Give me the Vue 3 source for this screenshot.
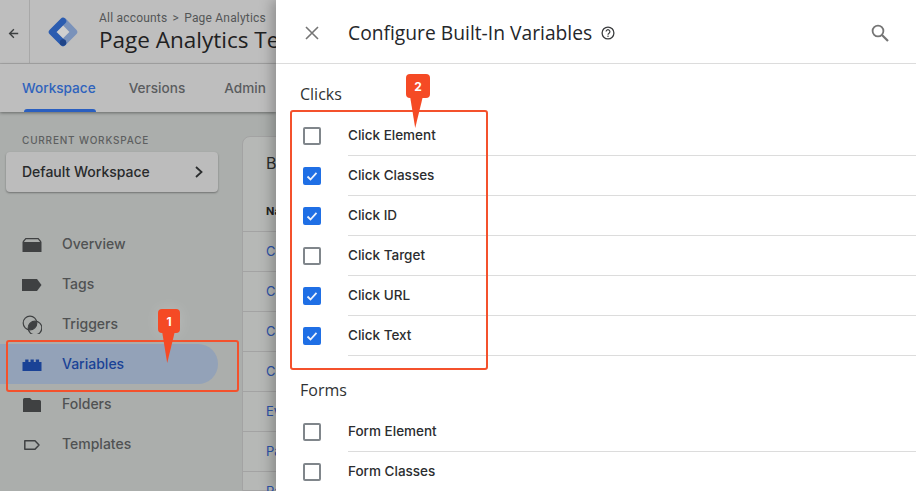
<script setup>
const nav = [
  { label: 'Overview', icon: 'overview' },
  { label: 'Tags', icon: 'tags' },
  { label: 'Triggers', icon: 'triggers' },
  { label: 'Variables', icon: 'variables', active: true },
  { label: 'Folders', icon: 'folders' },
  { label: 'Templates', icon: 'templates' }
]
const rows = ['Container ID', 'Custom Event', 'Click Text', 'Click URL', 'Event', 'Page Path', 'Page URL']
const sections = [
  {
    title: 'Clicks',
    items: [
      { label: 'Click Element', on: false },
      { label: 'Click Classes', on: true },
      { label: 'Click ID', on: true },
      { label: 'Click Target', on: false },
      { label: 'Click URL', on: true },
      { label: 'Click Text', on: true }
    ]
  },
  {
    title: 'Forms',
    items: [
      { label: 'Form Element', on: false },
      { label: 'Form Classes', on: false }
    ]
  }
]
</script>

<template>
  <div class="page">
    <div class="app">
      <header class="top">
        <button class="back" aria-label="Back">
          <svg width="11" height="11" viewBox="0 0 14 14"><path d="M13 7H2M7.500 1.500 2 7l5.500 5.500" fill="none" stroke="#3c3f40" stroke-width="1.700"/></svg>
        </button>
        <svg class="logo" width="32" height="32" viewBox="0 0 32 32">
          <path d="M16 9.500 22.500 16 16 22.500 9.500 16Z" fill="#cfcfcf"/>
          <path d="M17 5.500 27 16 17 26" fill="none" stroke="#7a92ba" stroke-width="6.500" stroke-linecap="round" stroke-linejoin="round"/>
          <path d="M16 5 5 16 16 27" fill="none" stroke="#2b5cb0" stroke-width="6.500" stroke-linecap="round" stroke-linejoin="round"/>
          <circle cx="16" cy="26.500" r="3.200" fill="#1f4488"/>
        </svg>
        <div class="titles">
          <div class="crumb">All accounts <span class="sep">&gt;</span> Page Analytics</div>
          <div class="container">Page Analytics Tem</div>
        </div>
      </header>
      <nav class="tabs">
        <span class="tab current">Workspace</span>
        <span class="tab versions">Versions</span>
        <span class="tab admin">Admin</span>
      </nav>
      <div class="main">
        <aside class="side">
          <div class="wlabel">CURRENT WORKSPACE</div>
          <div class="wbox">
            <span class="lift">Default Workspace</span>
            <svg width="10" height="14" viewBox="0 0 10 14"><path d="M2 2l5.500 5L2 12" fill="none" stroke="#2b2d2e" stroke-width="1.800"/></svg>
          </div>
          <ul class="navlist">
            <li v-for="n in nav" :key="n.label" class="navitem" :class="{ active: n.active }">
              <svg class="navicon" width="20" height="20" viewBox="0 0 20 20">
                <g v-if="n.icon === 'overview'">
                  <path d="M1 8 3.800 4.600H16.200L19 8" fill="none" stroke="#3f4142" stroke-width="1.200"/>
                  <path d="M.5 8h19v10H.5Z" fill="#3f4142"/>
                </g>
                <path v-else-if="n.icon === 'tags'" d="M0 5h15l4.500 6-4.500 6H0Z" fill="#3f4142"/>
                <g v-else-if="n.icon === 'triggers'">
                  <clipPath id="trigger-clip"><circle cx="8" cy="9" r="6.800"/></clipPath>
                  <circle cx="13" cy="14" r="6.800" fill="#3f4142" clip-path="url(#trigger-clip)"/>
                  <circle cx="8" cy="9" r="6.800" fill="none" stroke="#3f4142" stroke-width="1.200"/>
                  <circle cx="13" cy="14" r="6.800" fill="none" stroke="#3f4142" stroke-width="1.200"/>
                </g>
                <path v-else-if="n.icon === 'variables'" d="M.5 8h2.700V5.500h3.300V8h2V5.500h3.300V8h2V5.500h3.300V8h2.400v9H.5Z" fill="#1a4296"/>
                <path v-else-if="n.icon === 'folders'" d="M1 5.500Q1 4 2.500 4H8l2 2h7.500Q19 6 19 7.500V18H1Z" fill="#3f4142"/>
                <path v-else d="M2.800 6.700h10.200l4 4.300-4 4.300H2.800Z" fill="none" stroke="#3f4142" stroke-width="1.500" stroke-linejoin="round"/>
              </svg>
              <span class="lift">{{ n.label }}</span>
            </li>
          </ul>
        </aside>
        <section class="card">
          <div class="cardtitle">Built-In Variables</div>
          <div class="cardhead">Name</div>
          <div v-for="r in rows" :key="r" class="cardrow">{{ r }}</div>
        </section>
      </div>
    </div>

    <div class="panel">
      <header class="phead">
        <svg class="close" width="14" height="14" viewBox="0 0 14 14"><path d="M1 1l12 12M13 1 1 13" stroke="#757575" stroke-width="1.600" fill="none"/></svg>
        <h1>Configure Built-In Variables</h1>
        <svg class="help" width="14" height="14" viewBox="0 0 14 14">
          <circle cx="7" cy="7" r="5.900" fill="none" stroke="#3a3c3e" stroke-width="1.300"/>
          <path d="M5.100 5.600a1.900 1.900 0 1 1 2.900 1.600c-.7.450-1 .8-1 1.500" fill="none" stroke="#3a3c3e" stroke-width="1.200"/>
          <circle cx="7" cy="10.200" r=".75" fill="#3a3c3e"/>
        </svg>
        <svg class="search" width="20" height="20" viewBox="0 0 20 20">
          <circle cx="8" cy="8" r="5.400" fill="none" stroke="#757575" stroke-width="1.800"/>
          <path d="M12 12l6 6" stroke="#757575" stroke-width="2.200" fill="none"/>
        </svg>
      </header>
      <div class="pbody">
        <section v-for="s in sections" :key="s.title" class="group">
          <h2>{{ s.title }}</h2>
          <label v-for="i in s.items" :key="i.label" class="row">
            <span class="check" :class="{ on: i.on }">
              <svg v-if="i.on" width="14" height="14" viewBox="0 0 14 14"><path d="M2.500 7.500 5.500 10.500 11.500 3.800" fill="none" stroke="#eef3fc" stroke-width="1.800"/></svg>
            </span>
            <span class="name">{{ i.label }}</span>
          </label>
        </section>
      </div>
    </div>

    <div class="mark mark-a"></div>
    <div class="mark mark-b"></div>
    <div class="pin pin-a"><span>1</span></div>
    <div class="pin pin-b"><span>2</span></div>
  </div>
</template>

<style scoped>
.page {
  position: relative;
  width: 916px;
  height: 491px;
  overflow: hidden;
  display: flex;
  font-family: Inter, "Liberation Sans", sans-serif;
  background: #abaeac;
}
.app {
  width: 276px;
  flex: none;
  height: 491px;
  overflow: hidden;
  display: flex;
  flex-direction: column;
}
.top {
  height: 64px;
  flex: none;
  display: flex;
  align-items: center;
  background: #bebebe;
  border-bottom: 1px solid #a9a9a9;
  box-sizing: border-box;
}
.back {
  width: 30px;
  height: 63px;
  flex: none;
  padding: 3px 2px 0 0;
  background: none;
  border: 0;
  border-right: 1px solid #a8a8a8;
  display: flex;
  align-items: center;
  justify-content: center;
}
.logo { margin-left: 17px; flex: none; }
.titles { margin: 2px 0 0 20px; white-space: nowrap; }
.crumb { font-size: 12px; line-height: 14px; color: #545657; font-family: Roboto, sans-serif; letter-spacing: .2px; }
.sep { margin: 0 2px; }
.container { font-family: "Open Sans", sans-serif; font-size: 22.500px; line-height: 30px; color: #1f2122; }
.tabs {
  height: 48px;
  flex: none;
  position: relative;
  z-index: 1;
  display: flex;
  background: #bebebe;
  box-shadow: 0 1px 3px rgba(0, 0, 0, .4);
  font-size: 13.600px;
  font-weight: 500;
  color: #5a5c5e;
}
.tab { line-height: 48px; box-sizing: border-box; }
.tab.current { margin-left: 22px; color: #2f63bd; position: relative; }
.tab.current::after {
  content: "";
  position: absolute;
  left: 2px;
  right: 0;
  bottom: 0;
  height: 3px;
  background: #2a5fc0;
  border-radius: 3px 3px 0 0;
}
.versions { margin-left: 33px; }
.admin { margin-left: 39px; }
.main { flex: 1; display: flex; min-height: 0; }
.side { width: 242px; flex: none; }
.wlabel {
  margin: 22px 0 0 22px;
  font-size: 10px;
  line-height: 12px;
  letter-spacing: .8px;
  font-weight: 500;
  color: #5d5f60;
}
.wbox {
  margin: 6px 24px 0 6px;
  height: 40px;
  box-sizing: border-box;
  padding: 0 14px 0 16px;
  display: flex;
  align-items: center;
  justify-content: space-between;
  background: #bcbcbc;
  border-radius: 4px;
  box-shadow: 0 1px 2px rgba(0, 0, 0, .35);
  font-size: 14px;
  font-weight: 500;
  color: #282a2b;
}
.lift { padding-bottom: 2px; }
.navlist { list-style: none; margin: 32px 0 0; padding: 0; }
.navitem {
  height: 40px;
  width: 218px;
  box-sizing: border-box;
  padding-left: 22px;
  display: flex;
  align-items: center;
  gap: 20px;
  font-size: 14px;
  font-weight: 500;
  color: #505253;
  border-radius: 0 20px 20px 0;
}
.navitem.active { background: #93a2b8; color: #1a4296; }
.navicon { flex: none; }
.card {
  flex: none;
  width: 260px;
  margin-top: 24px;
  background: #b6b8b6;
  border: 1px solid #a3a3a3;
  border-radius: 8px 0 0 0;
  box-sizing: border-box;
  padding-top: 1px;
}
.cardtitle { padding-left: 23px; font-size: 16px; line-height: 50px; color: #2a2c2d; white-space: nowrap; }
.cardhead { padding-left: 23px; font-size: 11px; font-weight: 700; line-height: 46px; height: 44px; color: #222; border-bottom: 1px solid #a3a3a3; box-sizing: border-box; }
.cardrow {
  height: 40px;
  padding-left: 23px;
  box-sizing: border-box;
  border-bottom: 1px solid #a3a3a3;
  font-size: 13px;
  line-height: 39px;
  color: #2b52a8;
  white-space: nowrap;
}
.panel {
  flex: 1;
  min-width: 0;
  background: #fff;
  position: relative;
  z-index: 2;
  box-shadow: -4px 0 12px rgba(0, 0, 0, .25);
}
.phead {
  height: 64px;
  box-sizing: border-box;
  border-bottom: 1px solid #dcdcdc;
  display: flex;
  align-items: center;
  padding: 2px 0 0 29px;
}
.close { flex: none; }
h1 {
  margin: 0 0 0 29px;
  font-family: "Open Sans", sans-serif;
  font-size: 19.250px;
  font-weight: 400;
  color: #25272a;
  white-space: nowrap;
}
.help { margin-left: 9px; flex: none; }
.search { margin-left: auto; margin-right: 26px; flex: none; }
.pbody { padding-top: 20px; }
.group + .group { margin-top: 24px; }
h2 {
  margin: 0 0 12px 24px;
  font-family: "Open Sans", sans-serif;
  font-size: 16px;
  line-height: 20px;
  font-weight: 400;
  color: #303234;
}
.row { display: flex; height: 40px; padding-left: 27px; align-items: center; }
.check {
  width: 18px;
  height: 18px;
  box-sizing: border-box;
  border: 2px solid #80868b;
  border-radius: 2px;
  flex: none;
  display: flex;
  align-items: center;
  justify-content: center;
}
.check.on { background: #1f6fe5; border-color: #1f6fe5; }
.name {
  margin-left: 27px;
  flex: 1;
  align-self: stretch;
  line-height: 39px;
  border-bottom: 1px solid #dcdcdc;
  font-size: 13.500px;
  font-weight: 500;
  color: #2b2d2f;
}
.mark {
  position: absolute;
  border: 2px solid #f4512c;
  border-radius: 3px;
  box-sizing: border-box;
  z-index: 3;
}
.mark-a { left: 6px; top: 340px; width: 233px; height: 52px; }
.mark-b { left: 290px; top: 110px; width: 198px; height: 260px; }
.pin {
  position: absolute;
  z-index: 4;
  width: 24px;
  height: 24px;
  border-radius: 4px;
  background: #f54a25;
  color: #fff;
  font-size: 12px;
  font-weight: 700;
  display: flex;
  align-items: center;
  justify-content: center;
  box-shadow: 0 0 16px rgba(255, 255, 255, .18);
}
.pin::after {
  content: "";
  position: absolute;
  top: 22px;
  left: 4px;
  width: 13px;
  height: 32px;
  background: #f54a25;
  clip-path: polygon(0 0, 100% 0, 40% 100%);
}
.pin-a { left: 158px; top: 309px; width: 22px; }
.pin-b { left: 406px; top: 74px; }
</style>

<style>
html, body { margin: 0; background: #fff; }
</style>
